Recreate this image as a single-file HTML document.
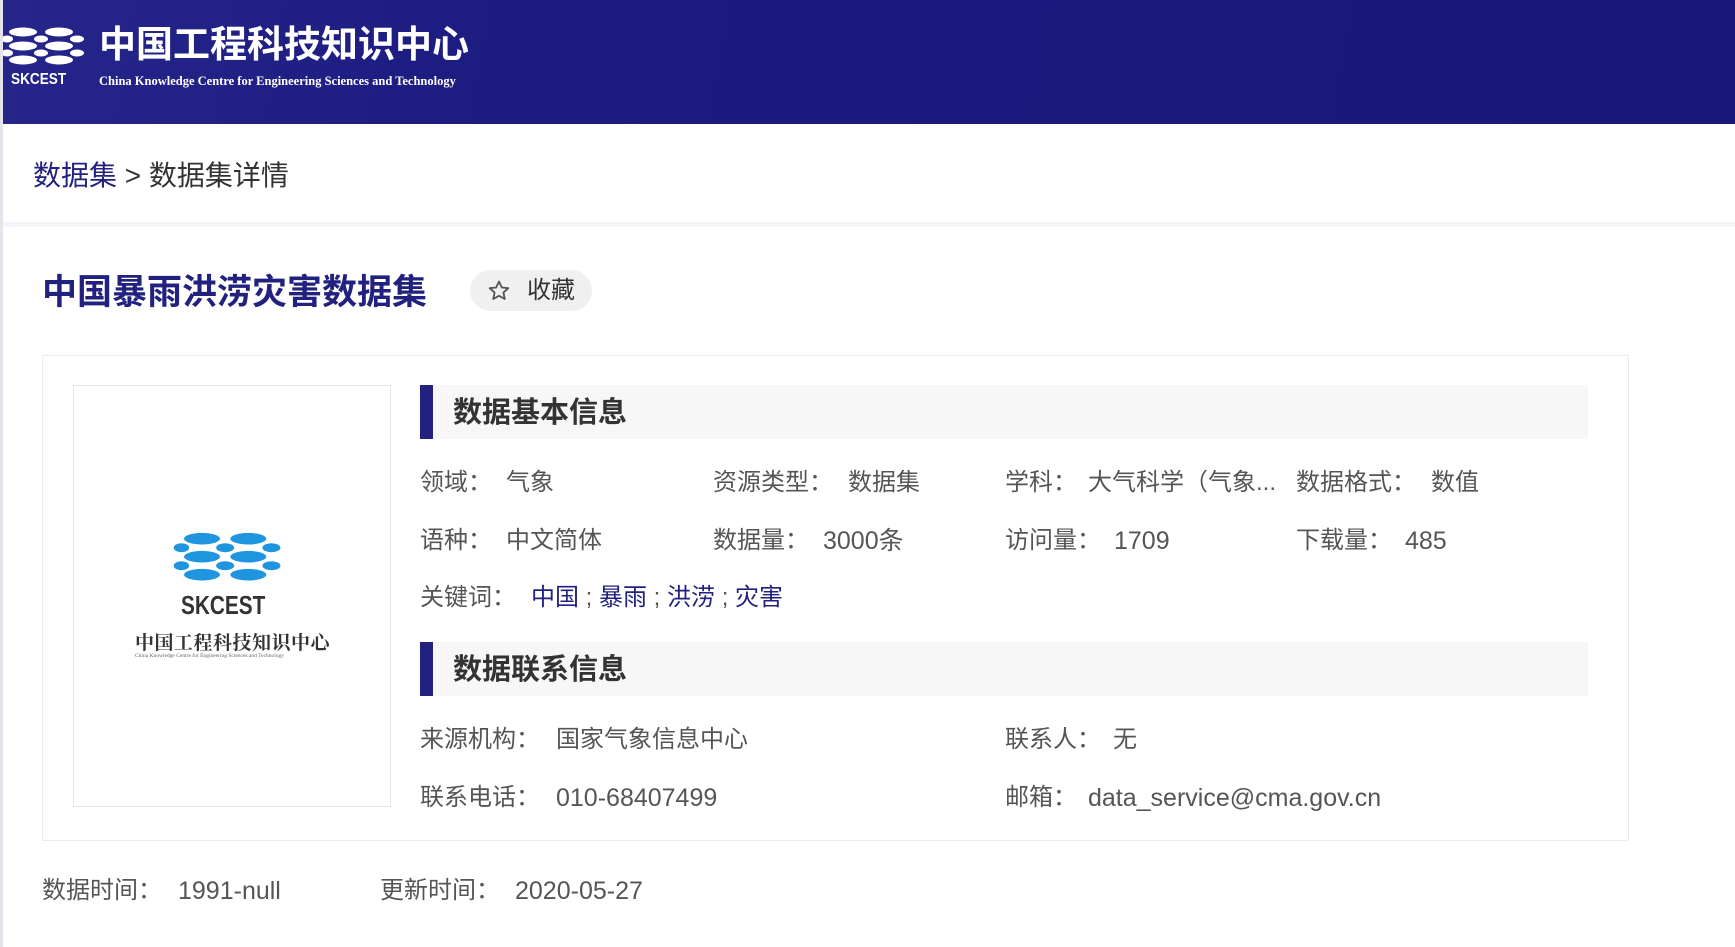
<!DOCTYPE html>
<html><head><meta charset="utf-8">
<style>
*{margin:0;padding:0;box-sizing:border-box}
body{width:1735px;height:947px;overflow:hidden;background:#fff;font-family:"Liberation Sans","Noto Sans CJK SC",sans-serif;color:#555;position:relative}
.a{position:absolute;white-space:nowrap;line-height:1}
#hdr{position:absolute;left:0;top:0;width:1735px;height:124px;background:linear-gradient(100deg,#26268a 0%,#1c1b80 30%,#18187a 100%)}
.strip{position:absolute;left:0;top:0;width:3px;height:947px;background:#e4e4ea}
.t{font-size:24px;color:#555}
.bar{position:absolute;left:420px;width:1168px;height:54px;background:#f7f7f7;border-left:13px solid #22217f}
.bar span{position:absolute;left:20px;top:14px;font-size:29px;font-weight:bold;color:#333;line-height:1}
.kw{color:#22217f}
</style></head><body>
<div id="hdr">
<svg class="a" style="left:3px;top:26px" width="82" height="42" viewBox="0 0 82 42">
<g fill="#fff">
<ellipse cx="20" cy="6" rx="14" ry="4.5"/><ellipse cx="56" cy="6" rx="14" ry="4.5"/>
<ellipse cx="4" cy="13" rx="6" ry="3.5"/><ellipse cx="38" cy="13" rx="7" ry="3.5"/><ellipse cx="74" cy="13" rx="7" ry="3.5"/>
<ellipse cx="20" cy="20" rx="14" ry="4.5"/><ellipse cx="56" cy="20" rx="14" ry="4.5"/>
<ellipse cx="4" cy="27" rx="6" ry="3.5"/><ellipse cx="38" cy="27" rx="7" ry="3.5"/><ellipse cx="74" cy="27" rx="7" ry="3.5"/>
<ellipse cx="20" cy="34" rx="14" ry="4.5"/><ellipse cx="56" cy="34" rx="14" ry="4.5"/>
</g></svg>
<div class="a" style="left:11px;top:72px;font-size:16px;font-weight:bold;color:#fff;transform:scaleX(0.85);transform-origin:left">SKCEST</div>
<div class="a" style="left:99px;top:26px;font-size:37px;font-weight:bold;color:#fff">中国工程科技知识中心</div>
<div class="a" style="left:99px;top:75px;font-size:12.5px;font-weight:bold;color:#fff;font-family:'Liberation Serif',serif">China Knowledge Centre for Engineering Sciences and Technology</div>
</div>
<div class="strip"></div>
<div class="a" style="left:33px;top:162px;font-size:28px;color:#333"><span style="color:#22217f">数据集</span> &gt; 数据集详情</div>
<div class="a" style="left:3px;top:222px;width:1732px;height:5px;background:#f5f5f7"></div>
<div class="a" style="left:42px;top:275px;font-size:35px;font-weight:bold;color:#22217f">中国暴雨洪涝灾害数据集</div>
<div class="a" style="left:470px;top:270px;width:122px;height:41px;border-radius:21px;background:#f0f0f0"></div>
<svg class="a" style="left:486px;top:279px" width="26" height="24" viewBox="0 0 24 24"><path d="M12 2.5l2.8 6 6.5.7-4.9 4.4 1.4 6.4L12 16.8 6.2 20l1.4-6.4L2.7 9.2l6.5-.7z" fill="none" stroke="#555" stroke-width="1.8" stroke-linejoin="round"/></svg>
<div class="a" style="left:527px;top:279px;font-size:24px;color:#333">收藏</div>

<div class="a" style="left:42px;top:355px;width:1587px;height:486px;border:1px solid #ebebeb"></div>
<div class="a" style="left:73px;top:385px;width:318px;height:422px;border:1px solid #e4e4e4"></div>
<svg class="a" style="left:164px;top:531px" width="130" height="54" viewBox="0 0 82 42">
<g fill="#1f95e0">
<ellipse cx="20" cy="6" rx="14" ry="4.5"/><ellipse cx="56" cy="6" rx="14" ry="4.5"/>
<ellipse cx="4" cy="13" rx="6" ry="3.5"/><ellipse cx="38" cy="13" rx="7" ry="3.5"/><ellipse cx="74" cy="13" rx="7" ry="3.5"/>
<ellipse cx="20" cy="20" rx="14" ry="4.5"/><ellipse cx="56" cy="20" rx="14" ry="4.5"/>
<ellipse cx="4" cy="27" rx="6" ry="3.5"/><ellipse cx="38" cy="27" rx="7" ry="3.5"/><ellipse cx="74" cy="27" rx="7" ry="3.5"/>
<ellipse cx="20" cy="34" rx="14" ry="4.5"/><ellipse cx="56" cy="34" rx="14" ry="4.5"/>
</g></svg>
<div class="a" style="left:181px;top:592px;font-size:26px;font-weight:bold;color:#333;transform:scaleX(0.8);transform-origin:left">SKCEST</div>
<div class="a" style="left:135px;top:632px;font-size:19px;font-weight:bold;color:#333;letter-spacing:0.5px;font-family:'Noto Serif CJK SC',serif">中国工程科技知识中心</div>
<div class="a" style="left:135px;top:654px;font-size:5.5px;color:#666;font-family:'Liberation Serif',serif">China Knowledge Centre for Engineering Sciences and Technology</div>

<div class="bar" style="top:385px"><span>数据基本信息</span></div>
<div class="a t" style="left:420px;top:471px">领域：</div><div class="a t" style="left:506px;top:471px">气象</div>
<div class="a t" style="left:713px;top:471px">资源类型：</div><div class="a t" style="left:848px;top:471px">数据集</div>
<div class="a t" style="left:1005px;top:471px">学科：</div><div class="a t" style="left:1088px;top:471px">大气科学（气象...</div>
<div class="a t" style="left:1296px;top:471px">数据格式：</div><div class="a t" style="left:1431px;top:471px">数值</div>

<div class="a t" style="left:420px;top:529px">语种：</div><div class="a t" style="left:506px;top:529px">中文简体</div>
<div class="a t" style="left:713px;top:529px">数据量：</div><div class="a t" style="left:823px;top:529px;font-size:25px">3000条</div>
<div class="a t" style="left:1005px;top:529px">访问量：</div><div class="a t" style="left:1114px;top:529px;font-size:25px">1709</div>
<div class="a t" style="left:1296px;top:529px">下载量：</div><div class="a t" style="left:1405px;top:529px;font-size:25px">485</div>

<div class="a t" style="left:420px;top:586px">关键词：</div><div class="a t" style="left:531px;top:586px"><span class="kw">中国</span> ; <span class="kw">暴雨</span> ; <span class="kw">洪涝</span> ; <span class="kw">灾害</span></div>

<div class="bar" style="top:642px"><span>数据联系信息</span></div>
<div class="a t" style="left:420px;top:728px">来源机构：</div><div class="a t" style="left:556px;top:728px">国家气象信息中心</div>
<div class="a t" style="left:1005px;top:728px">联系人：</div><div class="a t" style="left:1113px;top:728px">无</div>
<div class="a t" style="left:420px;top:786px">联系电话：</div><div class="a t" style="left:556px;top:786px;font-size:25px">010-68407499</div>
<div class="a t" style="left:1005px;top:786px">邮箱：</div><div class="a t" style="left:1088px;top:786px;font-size:25px">data_service@cma.gov.cn</div>

<div class="a t" style="left:42px;top:879px">数据时间：</div><div class="a t" style="left:178px;top:879px;font-size:25px">1991-null</div>
<div class="a t" style="left:380px;top:879px">更新时间：</div><div class="a t" style="left:515px;top:879px;font-size:25px">2020-05-27</div>
</body></html>
